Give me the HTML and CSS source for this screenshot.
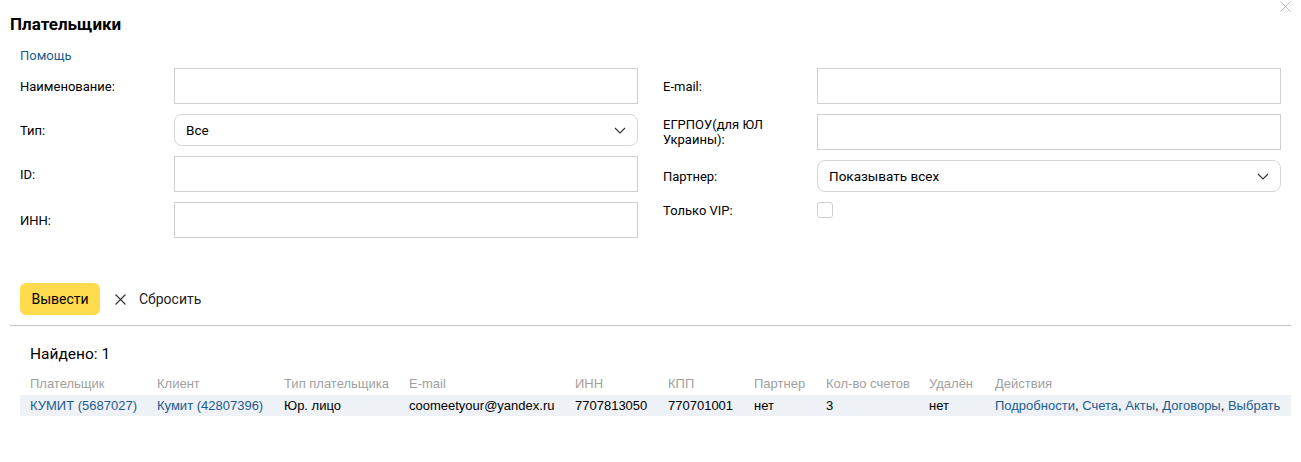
FILE: index.html
```html
<!DOCTYPE html>
<html lang="ru">
<head>
<meta charset="utf-8">
<title>Плательщики</title>
<link rel="stylesheet" href="styles.css">
</head>
<body>
<div class="page">
  <svg class="close" width="11" height="11" viewBox="0 0 11 11"><path d="M0.5 0.5L10.5 10.5M10.5 0.5L0.5 10.5" stroke="#b8b8b8" stroke-width="1" fill="none"/></svg>
  <h1 class="title">Плательщики</h1>
  <div class="help"><a class="link" href="#">Помощь</a></div>
  <div class="form">
    <div class="col">
      <div class="row"><div class="label">Наименование:</div><div class="input"></div></div>
      <div class="row"><div class="label">Тип:</div><div class="select"><span>Все</span><svg class="chev" width="12" height="7" viewBox="0 0 12 7"><path d="M1 1L6 6L11 1" stroke="#333" stroke-width="1.1" fill="none"/></svg></div></div>
      <div class="row"><div class="label">ID:</div><div class="input"></div></div>
      <div class="row"><div class="label">ИНН:</div><div class="input"></div></div>
    </div>
    <div class="col">
      <div class="row"><div class="label">E-mail:</div><div class="input"></div></div>
      <div class="row"><div class="label">ЕГРПОУ(для ЮЛ Украины):</div><div class="input"></div></div>
      <div class="row"><div class="label">Партнер:</div><div class="select"><span>Показывать всех</span><svg class="chev" width="12" height="7" viewBox="0 0 12 7"><path d="M1 1L6 6L11 1" stroke="#333" stroke-width="1.1" fill="none"/></svg></div></div>
      <div class="row"><div class="label">Только VIP:</div><div class="checkbox"></div></div>
    </div>
  </div>
  <div class="actions">
    <button class="btn">Вывести</button>
    <span class="reset"><svg width="11" height="11" viewBox="0 0 11 11"><path d="M0.5 0.5L10.5 10.5M10.5 0.5L0.5 10.5" stroke="#333" stroke-width="1.1" fill="none"/></svg><span>Сбросить</span></span>
  </div>
  <div class="divider"></div>
  <div class="found">Найдено: 1</div>
  <table class="table">
    <colgroup>
      <col class="c1"><col class="c2"><col class="c3"><col class="c4"><col class="c5"><col class="c6"><col class="c7"><col class="c8"><col class="c9"><col class="c10">
    </colgroup>
    <thead>
      <tr><th>Плательщик</th><th>Клиент</th><th>Тип плательщика</th><th>E-mail</th><th>ИНН</th><th>КПП</th><th>Партнер</th><th>Кол-во счетов</th><th>Удалён</th><th>Действия</th></tr>
    </thead>
    <tbody>
      <tr>
        <td><a class="link" href="#">КУМИТ (5687027)</a></td>
        <td><a class="link" href="#">Кумит (42807396)</a></td>
        <td>Юр. лицо</td>
        <td>coomeetyour@yandex.ru</td>
        <td>7707813050</td>
        <td>770701001</td>
        <td>нет</td>
        <td>3</td>
        <td>нет</td>
        <td><a class="link" href="#">Подробности</a>, <a class="link" href="#">Счета</a>, <a class="link" href="#">Акты</a>, <a class="link" href="#">Договоры</a>, <a class="link" href="#">Выбрать</a></td>
      </tr>
    </tbody>
  </table>
</div>
</body>
</html>
```
FILE: styles.css
```css
html, body { margin: 0; padding: 0; background: #fff; }
body { font-family: Roboto, "Liberation Sans", Arial, sans-serif; font-size: 13px; color: #000; }
.page { position: relative; width: 1301px; height: 462px; }
.close { position: absolute; top: 1px; left: 1280px; }
.title { margin: 0; padding: 14px 0 0 10px; font-size: 17px; line-height: 20px; font-weight: 700; }
.help { padding: 14px 0 0 20px; line-height: 16px; height: 20px; }
.link { color: #1c5b91; text-decoration: none; }
.form { display: flex; gap: 25px; padding: 0 20px; }
.col { width: 618px; display: flex; flex-direction: column; gap: 10px; }
.row { display: flex; align-items: center; }
.label { width: 154px; flex: none; line-height: 15px; padding-right: 30px; box-sizing: border-box; }
.input { width: 464px; height: 36px; border: 1px solid #cfcfcf; box-sizing: border-box; }
.select { width: 464px; height: 32px; border: 1px solid #d6d6d6; border-radius: 8px; box-sizing: border-box; display: flex; align-items: center; justify-content: space-between; padding: 0 11px 0 11px; font-size: 13.5px; }
.checkbox { width: 16px; height: 16px; border: 1px solid #cfcfcf; border-radius: 3px; box-sizing: border-box; }
.actions { display: flex; align-items: center; padding: 45px 0 0 20px; }
.btn { width: 80px; height: 32px; border: none; border-radius: 6px; background: #ffdb4d; font-family: inherit; font-size: 14px; color: #000; padding: 0; }
.reset { display: flex; align-items: center; gap: 13px; margin-left: 15px; font-size: 14px; color: #222; }
.divider { margin: 10px 10px 0 10px; border-top: 1px solid #c4c4c4; }
.found { padding: 18px 0 0 30px; font-size: 15.5px; line-height: 20px; }
.table { margin: 9px 0 0 20px; width: 1271px; border-collapse: collapse; table-layout: fixed; font-family: "Liberation Sans", Arial, sans-serif; font-size: 13px; }
.table th { text-align: left; font-weight: 400; color: #a0a0a0; padding: 3px 0 3px 10px; line-height: 16px; white-space: nowrap; }
.table td { text-align: left; padding: 3px 0 3px 10px; line-height: 15px; background: #eef1f5; white-space: nowrap; }
.c1 { width: 127px; } .c2 { width: 127px; } .c3 { width: 125px; } .c4 { width: 166px; } .c5 { width: 93px; }
.c6 { width: 86px; } .c7 { width: 72px; } .c8 { width: 103px; } .c9 { width: 66px; } .c10 { width: 306px; }
```
